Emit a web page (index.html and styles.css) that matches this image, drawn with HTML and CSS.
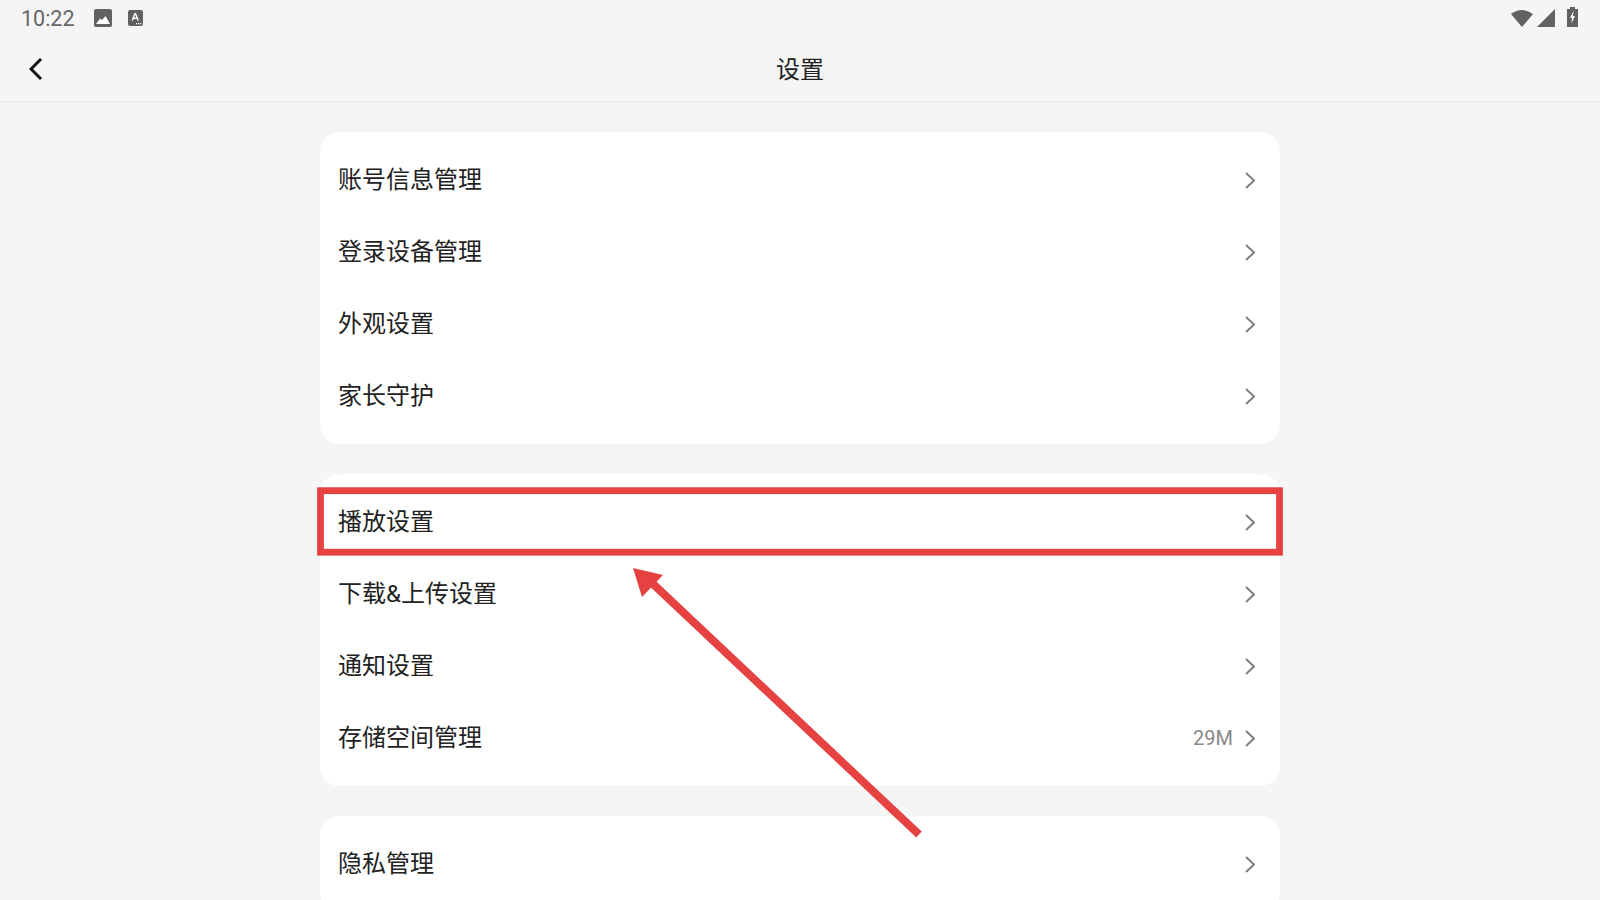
FILE: index.html
```html
<!DOCTYPE html>
<html lang="zh-CN">
<head>
    <meta charset="UTF-8">
    <title>设置</title>
    <link rel="stylesheet" href="styles.css">
</head>
<body>

<div class="page">
    <div class="status-bar">
        <span class="time">10:22</span>
        <svg class="icon-image" width="18" height="18" viewBox="0 0 18 18">
            <rect width="18" height="18" rx="2" fill="#616161"/>
            <path d="M2 15 L6 9.5 L8 11 L11.5 7 L16 15 Z" fill="#fff"/>
        </svg>
        <svg class="icon-font" width="15" height="16" viewBox="0 0 15 16">
            <rect width="15" height="16" rx="2" fill="#616161"/>
            <path d="M3.5 10.5 L6.5 3 H8 L11 10.5 H9.3 L8.8 9 H5.7 L5.2 10.5 Z M6.2 7.6 H8.3 L7.25 4.8 Z" fill="#fff" fill-rule="evenodd"/>
            <path d="M8 13 h1.2 v1.2 h-1.2 z M10 13 h1.2 v1.2 h-1.2 z M12 13 h1.2 v1.2 h-1.2 z" fill="#fff"/>
        </svg>
        <div class="status-right">
            <svg width="22" height="18" viewBox="0 0 22 18"><path d="M0 5 Q11 -3 22 5 L11 18 Z" fill="#616161"/></svg>
            <svg width="18" height="18" viewBox="0 0 18 18"><path d="M18 0 V18 H0 Z" fill="#616161"/></svg>
            <svg class="icon-battery" width="11" height="20" viewBox="0 0 11 20">
                <path d="M3 0 H8 V2 H11 V20 H0 V2 H3 Z" fill="#616161"/>
                <path d="M6.5 4 L3 11 H5 L4.5 16.5 L8 9 H6 Z" fill="#f5f5f5"/>
            </svg>
        </div>
    </div>

    <header class="top-bar">
        <svg class="back" width="14" height="24" viewBox="0 0 14 24"><path d="M12 2 L2 12 L12 22" fill="none" stroke="#111" stroke-width="3"/></svg>
        <h1>设置</h1>
    </header>

    <main class="content">
        <section class="card">
            <div class="row"><span class="label">账号信息管理</span><svg class="chevron" width="10" height="17" viewBox="0 0 10 17"><path d="M1 1 L9 8.5 L1 16" fill="none" stroke="#808080" stroke-width="2"/></svg></div>
            <div class="row"><span class="label">登录设备管理</span><svg class="chevron" width="10" height="17" viewBox="0 0 10 17"><path d="M1 1 L9 8.5 L1 16" fill="none" stroke="#808080" stroke-width="2"/></svg></div>
            <div class="row"><span class="label">外观设置</span><svg class="chevron" width="10" height="17" viewBox="0 0 10 17"><path d="M1 1 L9 8.5 L1 16" fill="none" stroke="#808080" stroke-width="2"/></svg></div>
            <div class="row"><span class="label">家长守护</span><svg class="chevron" width="10" height="17" viewBox="0 0 10 17"><path d="M1 1 L9 8.5 L1 16" fill="none" stroke="#808080" stroke-width="2"/></svg></div>
        </section>

        <section class="card">
            <div class="row"><span class="label">播放设置</span><svg class="chevron" width="10" height="17" viewBox="0 0 10 17"><path d="M1 1 L9 8.5 L1 16" fill="none" stroke="#808080" stroke-width="2"/></svg></div>
            <div class="row"><span class="label">下载&amp;上传设置</span><svg class="chevron" width="10" height="17" viewBox="0 0 10 17"><path d="M1 1 L9 8.5 L1 16" fill="none" stroke="#808080" stroke-width="2"/></svg></div>
            <div class="row"><span class="label">通知设置</span><svg class="chevron" width="10" height="17" viewBox="0 0 10 17"><path d="M1 1 L9 8.5 L1 16" fill="none" stroke="#808080" stroke-width="2"/></svg></div>
            <div class="row"><span class="label">存储空间管理</span><span class="value">29M</span><svg class="chevron" width="10" height="17" viewBox="0 0 10 17"><path d="M1 1 L9 8.5 L1 16" fill="none" stroke="#808080" stroke-width="2"/></svg></div>
        </section>

        <section class="card">
            <div class="row"><span class="label">隐私管理</span><svg class="chevron" width="10" height="17" viewBox="0 0 10 17"><path d="M1 1 L9 8.5 L1 16" fill="none" stroke="#808080" stroke-width="2"/></svg></div>
        </section>
    </main>

    <!-- red annotation drawn over the screenshot -->
    <svg class="annotation" width="1600" height="900" viewBox="0 0 1600 900">
        <rect x="320.5" y="490.7" width="959" height="61.5" fill="none" stroke="#e64242" stroke-width="6.8"/>
        <path d="M919 834.5 L651 582" fill="none" stroke="#e64242" stroke-width="8"/>
        <path d="M633 568 L663 575 L642 597 Z" fill="#e64242"/>
    </svg>
</div>

</body>
</html>
```

FILE: styles.css
```css
* {
    box-sizing: border-box;
}
body {
    margin: 0;
    font-family: Roboto, "Noto Sans CJK SC", sans-serif;
    background: #f5f5f5;
}
.page {
    position: relative;
    width: 1600px;
    height: 900px;
    overflow: hidden;
    background: #f5f5f5;
}
.status-bar {
    display: flex;
    align-items: center;
    height: 36px;
    padding: 0 22px 0 21px;
}
.time {
    width: 73px;
    font-size: 21.5px;
    color: #666;
}
.icon-font {
    margin-left: 16px;
}
.status-right {
    display: flex;
    align-items: center;
    gap: 4px;
    margin-left: auto;
}
.icon-battery {
    margin-left: 8px;
    margin-top: -3px;
}
.top-bar {
    position: relative;
    display: flex;
    align-items: center;
    justify-content: center;
    height: 66px;
    border-bottom: 1px solid #e8e8e8;
}
.top-bar h1 {
    margin: 2px 0 0;
    font-size: 24px;
    font-weight: 400;
    line-height: 32px;
    color: #222;
}
.back {
    position: absolute;
    left: 29px;
    top: 21px;
}
.content {
    display: flex;
    flex-direction: column;
    gap: 30px;
    width: 960px;
    margin: 30px auto 0;
}
.card {
    padding: 12px 0;
    background: #fff;
    border-radius: 20px;
}
.row {
    display: flex;
    align-items: center;
    height: 72px;
    padding: 0 25px 0 18px;
}
.label {
    flex: 1;
    font-size: 24px;
    line-height: 32px;
    color: #222;
}
.value {
    margin-right: 12px;
    font-size: 20px;
    color: #888;
}
.annotation {
    position: absolute;
    left: 0;
    top: 0;
}
```
